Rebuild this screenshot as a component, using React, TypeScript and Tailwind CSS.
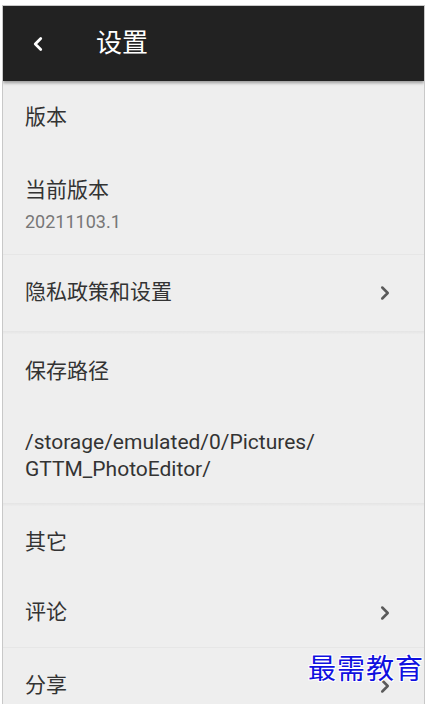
import { ChevronLeft, ChevronRight } from 'lucide-react';

const FONT = { fontFamily: 'Roboto, "Noto Sans CJK SC", sans-serif' };

function SectionHeader({ title, className }: { title: string; className: string }) {
  return (
    <div className={`flex items-center px-[22px] ${className}`}>
      <span className="text-[21px] text-[#333]">{title}</span>
    </div>
  );
}

function LinkRow({ title, className }: { title: string; className: string }) {
  return (
    <div className={`flex items-center justify-between pl-[22px] pr-[28px] ${className}`}>
      <span className="text-[21px] text-[#333]">{title}</span>
      <ChevronRight className="w-[22px] h-[22px] text-[#5a5a5a]" strokeWidth={2.75} />
    </div>
  );
}

export default function App() {
  return (
    <div className="w-[432px] h-[704px] bg-white overflow-hidden relative" style={FONT}>
      <div className="ml-[2px] mt-[5px] w-[423px] h-[699px] border-l border-t border-r border-[#c8c8c8] bg-[#eeeeee] overflow-hidden">
        {/* Toolbar */}
        <div className="h-[75px] bg-[#222222] flex items-center shadow-[0_2px_3px_rgba(0,0,0,0.35)] relative z-10">
          <ChevronLeft className="ml-[24px] w-[22px] h-[22px] text-white" strokeWidth={3} />
          <span className="ml-[47px] text-[26px] text-white">设置</span>
        </div>

        <SectionHeader title="版本" className="h-[74px]" />

        <div className="h-[100px] flex flex-col justify-center px-[22px] border-b border-[#e6e6e6]">
          <span className="text-[21px] text-[#333] leading-[30px]">当前版本</span>
          <span className="text-[18px] text-[#777] leading-[26px] mt-[4px]">20211103.1</span>
        </div>

        <LinkRow title="隐私政策和设置" className="h-[76px]" />

        <div className="h-[3px] bg-gradient-to-b from-[#e4e4e4] to-[#ececec]" />

        <SectionHeader title="保存路径" className="h-[75px]" />

        <div className="h-[94px] flex items-center px-[22px]">
          <span className="text-[21px] text-[#333] leading-[27px]">
            /storage/emulated/0/Pictures/
            <br />
            GTTM_PhotoEditor/
          </span>
        </div>

        <div className="h-[3px] bg-gradient-to-b from-[#e4e4e4] to-[#ececec]" />

        <SectionHeader title="其它" className="h-[73px]" />

        <LinkRow title="评论" className="h-[69px] border-b border-[#e6e6e6]" />

        <LinkRow title="分享" className="h-[76px]" />
      </div>

      {/* watermark */}
      <div
        className="absolute right-[8px] bottom-[16px] text-[28px] text-[#1010e0] tracking-[1px]"
        style={{
          fontFamily: '"Noto Sans CJK SC", serif',
          textShadow: '1px 1px 0 #fff, -1px -1px 0 #fff, 1px -1px 0 #fff, -1px 1px 0 #fff',
        }}
      >
        最需教育
      </div>
    </div>
  );
}
